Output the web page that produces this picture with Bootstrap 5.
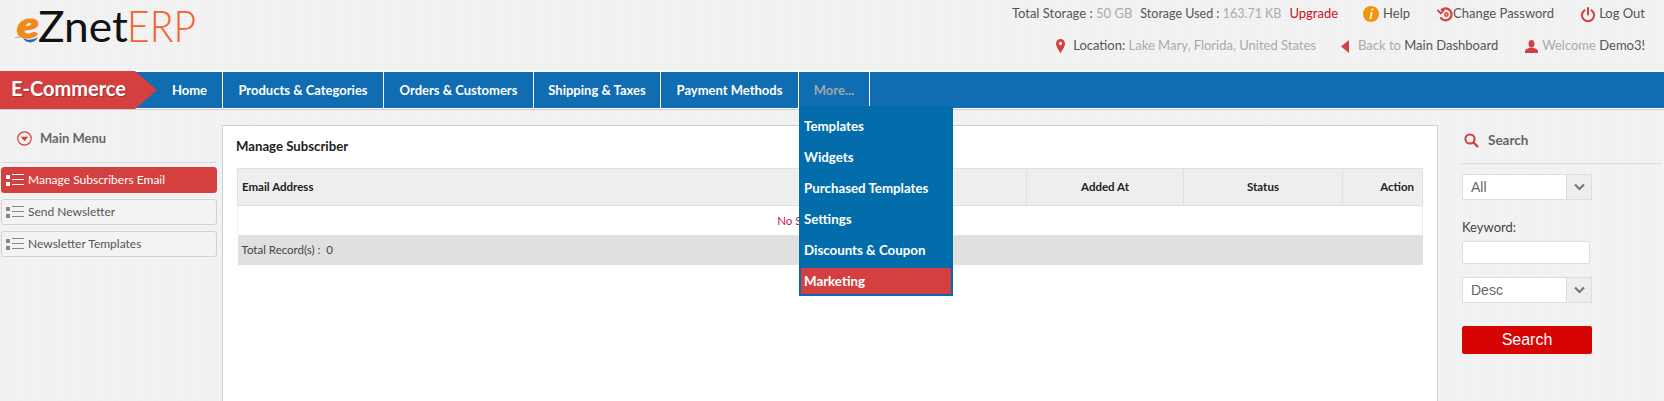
<!DOCTYPE html>
<html lang="en">
<head>
  <meta charset="UTF-8">
  <title>ZnetERP - Manage Subscriber</title>
  <link href="https://cdn.jsdelivr.net/npm/bootstrap@5.3.0/dist/css/bootstrap.min.css" rel="stylesheet">
  <style>
    html, body { height: 100%; overflow: hidden; }
    body {
      font-family: Lato, "Liberation Sans", sans-serif;
      font-size: 13px;
      color: #444;
      background-color: #f3f3f3;
      background-image:
        repeating-linear-gradient(0deg, rgba(0,0,0,.012) 0 1px, transparent 1px 4px),
        repeating-linear-gradient(90deg, rgba(0,0,0,.012) 0 1px, transparent 1px 5px);
    }
    a { text-decoration: none; color: inherit; }

    /* top header */
    .top-head { height: 71px; }
    .brand-logo { padding-left: 13px; height: 52px; line-height: 52px; font-size: 43px; white-space: nowrap; }
    .brand-logo svg { flex: none; margin-right: -2.5px; }
    .logo-znet { display: inline-block; width: 89px; color: #111; }
    .logo-znet b { display: inline-block; font-weight: 400; transform: scaleX(1.03); transform-origin: left; }
    .logo-erp { display: inline-block; width: 67px; color: #f2622e; }
    .logo-erp b { display: inline-block; font-weight: 300; transform: scaleX(.91); transform-origin: left; }
    .top-info { padding: 4px 19px 0 0; font-size: 13px; color: #555; }
    .info-row { height: 20px; white-space: nowrap; margin-bottom: 12px; }
    .info-row svg { flex: none; }
    .storage-txt { font-size: 12.5px; }
    .muted-val { color: #aaa; }
    .upgrade { color: #cc1122; }
    .gap-big { margin-left: 27px; }

    /* blue bar */
    .main-nav { height: 38px; background: #106db2; border-top: 1px solid #fff; border-bottom: 1px solid #fff; box-shadow: 0 1px 0 #ccc; position: relative; }
    .module-tag {
      width: 157px; height: 38px; margin: -1px 0; background: #d43f3f; color: #fff;
      font-size: 20px; font-weight: 700; padding: 2px 0 0 11px; flex: none;
      clip-path: polygon(0 0, 135px 0, 157px 50%, 135px 100%, 0 100%);
      text-shadow: 1px 1px 1px rgba(0,0,0,.25);
    }
    .nav-entry { height: 36px; line-height: 36px; color: #fff; font-size: 13px; font-weight: 700; text-align: center; border-right: 1px solid #fff; flex: none; }
    .nav-entry.more { color: #9fa6ad; position: relative; }
    .more-menu {
      position: absolute; left: 0; top: 34px; width: 154px; z-index: 10; background: #036cab;
      padding: 2px; margin: 0; list-style: none; text-align: left; line-height: 26px;
    }
    .more-menu li { height: 26px; margin-top: 5px; padding-left: 3px; color: #fff; font-size: 13.3px; font-weight: 700; white-space: nowrap; }
    .more-menu li.on { background: #d43f3f; }

    /* page body */
    .page-body { padding-top: 16px; }
    .left-col { width: 222px; flex: none; padding-right: 5px; }
    .right-col { width: 226px; flex: none; padding: 0 3px 0 24px; }
    .col-title { font-size: 13.5px; font-weight: 700; color: #666; border-bottom: 1px solid #d9d9d9; }
    .left-col .col-title { height: 38px; padding: 0 0 10px 16px; margin: 0 0 4px 1px; gap: 8px; font-size: 13px; }
    .right-col .col-title { height: 39px; padding: 0 0 7px 2px; margin-bottom: 10px; gap: 9px; }
    .side-link {
      display: flex; align-items: center; gap: 4px; height: 26px; margin: 0 0 6px 1px; padding-left: 4px;
      background: #f3f3f3; border: 1px solid #d2d2d2; border-radius: 3px; color: #555; font-size: 12px;
    }
    .side-link.on { background: #d43f3f; border-color: #d43f3f; color: #fff; }
    .content-panel { flex: 1; min-width: 0; height: 290px; background: #fff; border: 1px solid #d0d0d0; border-bottom: 0; padding: 0 14px; }
    .panel-title { height: 42px; line-height: 40px; font-size: 13.2px; font-weight: 700; color: #222; margin: 0 0 0 -1px; }
    .sub-table { table-layout: fixed; width: 100%; margin: 0; font-size: 11.5px; color: #222; border-collapse: collapse; }
    .sub-table th { height: 37px; background: #eee; border: 1px solid #e0e0e0; font-weight: 700; padding: 0 4px; vertical-align: middle; }
    .sub-table td { padding: 0 4px; vertical-align: middle; background: #fff; }
    .sub-table .empty-row td { height: 29px; color: #c2185b; text-align: center; border-left: 1px solid #eee; border-right: 1px solid #eee; }
    .sub-table .total-row td { height: 30px; background: #e0e0e0; color: #444; }

    /* right search form */
    .form-box { width: 130px; }
    .pick { height: 26px; display: flex; background: #fff; border: 1px solid #d8dee8; font-family: "Liberation Sans", sans-serif; font-size: 14px; color: #666; }
    .pick span { flex: 1; padding: 2px 0 0 8px; }
    .pick i { width: 25px; background: #eee; border-left: 1px solid #d8dee8; display: flex; align-items: center; justify-content: center; }
    .kw-label { margin: 19px 0 6px; font-size: 13px; color: #444; line-height: 16px; }
    .kw-input { display: block; width: 128px; height: 23px; background: #fff; border: 1px solid #d8dee8; border-radius: 2px; margin-bottom: 13px; }
    .go-btn { width: 130px; height: 28px; margin-top: 23px; padding: 0; background: #d70404; border: 0; border-radius: 2px; color: #fff; font-family: "Liberation Sans", sans-serif; font-size: 16px; }
  </style>
</head>
<body>
  <header class="top-head d-flex justify-content-between">
    <div class="brand-logo d-flex">
      <svg width="27" height="52" viewBox="0 0 27 52">
        <path d="M0 38 C5 37 9 36 13 34.5 L13 35.5 C9 37 5 38 0 38 Z" fill="#e8501f"/>
        <text x="4" y="38" font-family="Lato, sans-serif" font-size="36" font-weight="900" font-style="italic" textLength="22" lengthAdjust="spacingAndGlyphs" fill="#f08a1d" stroke="#f08a1d" stroke-width="1.2">e</text>
        <path d="M10 38 C15 41 20 40 25 37 C22 44 13 44 10 38 Z" fill="#1c6fb5"/>
      </svg>
      <span class="logo-znet"><b>Znet</b></span><span class="logo-erp"><b>ERP</b></span>
    </div>
    <div class="top-info">
      <div class="info-row d-flex align-items-center justify-content-end">
        <span>Total Storage : <span class="muted-val">50 GB</span></span>
        <span class="storage-txt ms-2">Storage Used : <span class="muted-val">163.71 KB</span></span>
        <a href="#" class="upgrade ms-2">Upgrade</a>
        <svg class="me-1" style="margin-left:25px" width="16" height="16" viewBox="0 0 16 16"><circle cx="8" cy="8" r="8" fill="#f0930e"/><path d="M8.6 2.6h1.9l-.4 1.9H8.2zM7.7 6h2L8.4 13H6.4z" fill="#fff3d6"/></svg>
        <a href="#">Help</a>
        <svg class="gap-big" width="16" height="15" viewBox="0 0 16 15" fill="none" stroke="#d43f3f" stroke-width="2.2"><path d="M4 3.4A6 6 0 1 1 3.4 10.4"/><path d="M.4 2.8l3.4 3.6 3-3.4" stroke-width="1.9"/><circle cx="9.4" cy="7.6" r="1.6" stroke-width="1.6"/></svg>
        <a href="#" class="ms-0">Change Password</a>
        <svg class="gap-big" width="14" height="15" viewBox="0 0 14 15" fill="none" stroke="#d43f3f" stroke-width="2" stroke-linecap="round"><path d="M3.6 3.2a6 6 0 1 0 6.8 0"/><path d="M7 1v6.5"/></svg>
        <a href="#" class="ms-1">Log Out</a>
      </div>
      <div class="info-row d-flex align-items-center justify-content-end">
        <svg width="9" height="14" viewBox="0 0 9 14"><path d="M4.5 0A4.5 4.5 0 0 0 0 4.5C0 8 4.5 14 4.5 14S9 8 9 4.5A4.5 4.5 0 0 0 4.5 0Zm0 6.2a1.7 1.7 0 1 1 0-3.4 1.7 1.7 0 0 1 0 3.4Z" fill="#d43f3f"/></svg>
        <span style="margin-left:8px">Location: <span class="muted-val">Lake Mary, Florida, United States</span></span>
        <svg style="margin-left:25px" width="8" height="13" viewBox="0 0 8 13"><path d="M8 0v13L0 6.5z" fill="#d43f3f"/></svg>
        <a href="#" style="margin-left:9px"><span class="muted-val">Back to</span> Main Dashboard</a>
        <svg class="gap-big" width="13" height="13" viewBox="0 0 13 13"><ellipse cx="6.5" cy="3.8" rx="3" ry="3.8" fill="#d43f3f"/><path d="M0 13v-2c0-1.6 3-2.4 4.6-3.2h3.8C10 8.6 13 9.4 13 11v2z" fill="#d43f3f"/></svg>
        <span class="ms-1"><span class="muted-val">Welcome</span> Demo3!</span>
      </div>
    </div>
  </header>

  <nav class="main-nav d-flex">
    <div class="module-tag">E-Commerce</div>
    <a href="#" class="nav-entry" style="width:66px">Home</a>
    <a href="#" class="nav-entry" style="width:161px">Products &amp; Categories</a>
    <a href="#" class="nav-entry" style="width:150px">Orders &amp; Customers</a>
    <a href="#" class="nav-entry" style="width:127px">Shipping &amp; Taxes</a>
    <a href="#" class="nav-entry" style="width:138px">Payment Methods</a>
    <div class="nav-entry more" style="width:71px">More...
      <ul class="more-menu">
        <li>Templates</li>
        <li>Widgets</li>
        <li>Purchased Templates</li>
        <li>Settings</li>
        <li>Discounts &amp; Coupon</li>
        <li class="on">Marketing</li>
      </ul>
    </div>
  </nav>

  <div class="page-body d-flex">
    <aside class="left-col">
      <div class="col-title d-flex align-items-center">
        <svg width="15" height="15" viewBox="0 0 15 15"><circle cx="7.5" cy="7.5" r="6.7" fill="none" stroke="#d43f3f" stroke-width="1.2"/><path d="M3.8 5.8h7.4L7.5 10.2z" fill="#d43f3f"/></svg>
        Main Menu
      </div>
      <a href="#" class="side-link on"><svg width="18" height="12" viewBox="0 0 18 12" fill="#fff"><rect y="1" width="4" height="4"/><rect y="8" width="4" height="4"/><rect x="6" y="0" width="12" height="1"/><rect x="6" y="5" width="12" height="1"/><rect x="6" y="10" width="12" height="1"/></svg>Manage Subscribers Email</a>
      <a href="#" class="side-link"><svg width="18" height="12" viewBox="0 0 18 12" fill="#888"><rect y="1" width="4" height="4"/><rect y="8" width="4" height="4"/><rect x="6" y="0" width="12" height="1"/><rect x="6" y="5" width="12" height="1"/><rect x="6" y="10" width="12" height="1"/></svg>Send Newsletter</a>
      <a href="#" class="side-link"><svg width="18" height="12" viewBox="0 0 18 12" fill="#888"><rect y="1" width="4" height="4"/><rect y="8" width="4" height="4"/><rect x="6" y="0" width="12" height="1"/><rect x="6" y="5" width="12" height="1"/><rect x="6" y="10" width="12" height="1"/></svg>Newsletter Templates</a>
    </aside>

    <main class="content-panel">
      <h1 class="panel-title">Manage Subscriber</h1>
      <table class="sub-table">
        <colgroup><col><col style="width:157px"><col style="width:159px"><col style="width:80px"></colgroup>
        <thead>
          <tr><th>Email Address</th><th class="text-center">Added At</th><th class="text-center">Status</th><th class="text-end pe-2">Action</th></tr>
        </thead>
        <tbody>
          <tr class="empty-row"><td colspan="4">No Subscriber Found</td></tr>
          <tr class="total-row"><td colspan="4">Total Record(s) :&nbsp; 0</td></tr>
        </tbody>
      </table>
    </main>

    <aside class="right-col">
      <div class="col-title d-flex align-items-center">
        <svg width="15" height="15" viewBox="0 0 15 15" fill="none" stroke="#d43f3f" stroke-width="2"><circle cx="6" cy="6" r="4.6"/><path d="M9.5 9.5 14 14" stroke-width="2.4"/></svg>
        <span>Search</span>
      </div>
      <div class="form-box">
        <div class="pick"><span>All</span><i><svg width="11" height="8" viewBox="0 0 11 8" fill="none" stroke="#777" stroke-width="2.2"><path d="M1 1.5l4.5 4.5L10 1.5"/></svg></i></div>
        <label class="kw-label d-block">Keyword:</label>
        <input class="kw-input" type="text">
        <div class="pick"><span>Desc</span><i><svg width="11" height="8" viewBox="0 0 11 8" fill="none" stroke="#777" stroke-width="2.2"><path d="M1 1.5l4.5 4.5L10 1.5"/></svg></i></div>
        <button class="go-btn" type="button">Search</button>
      </div>
    </aside>
  </div>
  <script src="https://cdn.jsdelivr.net/npm/bootstrap@5.3.0/dist/js/bootstrap.bundle.min.js"></script>
</body>
</html>
